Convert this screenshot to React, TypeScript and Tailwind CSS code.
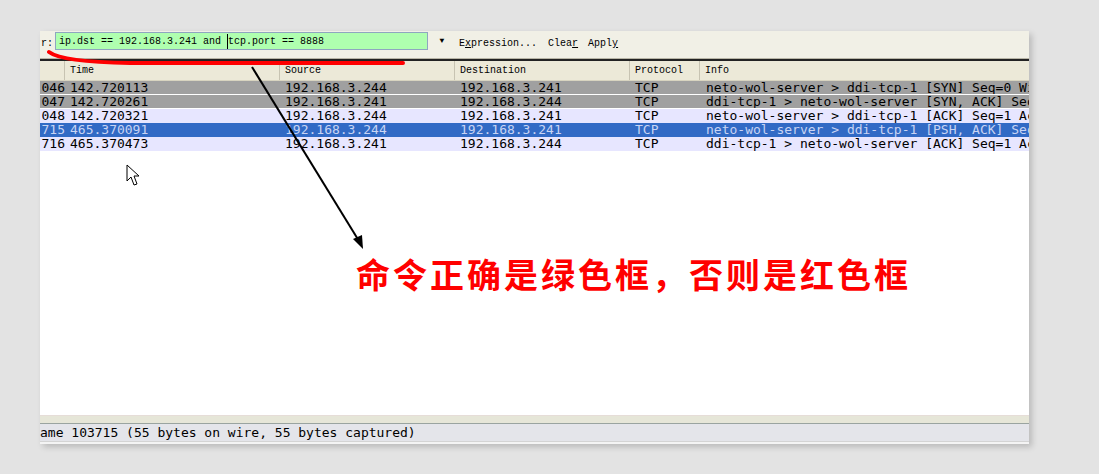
import React from "react";

const rows = [
  { no: "046", time: "142.720113", src: "192.168.3.244", dst: "192.168.3.241", info: "neto-wol-server > ddi-tcp-1 [SYN] Seq=0 Win=65535 Len=0", kind: "gray" },
  { no: "047", time: "142.720261", src: "192.168.3.241", dst: "192.168.3.244", info: "ddi-tcp-1 > neto-wol-server [SYN, ACK] Seq=0 Ack=1", kind: "gray" },
  { no: "048", time: "142.720321", src: "192.168.3.244", dst: "192.168.3.241", info: "neto-wol-server > ddi-tcp-1 [ACK] Seq=1 Ack=1 Win=65535", kind: "lav" },
  { no: "715", time: "465.370091", src: "192.168.3.244", dst: "192.168.3.241", info: "neto-wol-server > ddi-tcp-1 [PSH, ACK] Seq=1 Ack=1", kind: "sel" },
  { no: "716", time: "465.370473", src: "192.168.3.241", dst: "192.168.3.244", info: "ddi-tcp-1 > neto-wol-server [ACK] Seq=1 Ack=2 Win=65535", kind: "lav" },
];

const rowBg: Record<string, string> = {
  gray: "bg-[#a0a0a0] text-black border-b border-white",
  lav: "bg-[#e7e6ff] text-black",
  sel: "bg-[#316ac5] text-[#c8d4f4]",
};

const App = () => {
  return (
    <div className="relative w-[1099px] h-[474px] bg-[#e3e3e3] overflow-hidden pt-[31px] pl-[40px]">
      {/* window */}
      <div className="w-[989px] h-[413px] bg-white flex flex-col overflow-hidden shadow-[3px_3px_6px_rgba(0,0,0,0.18)]">
        {/* filter toolbar */}
        <div className="h-[27px] shrink-0 bg-[#f1f0e6] flex items-start pt-[1px] font-['Liberation_Mono',monospace] text-[10px] text-black">
          <span className="w-[15px] shrink-0 pl-[1px] pt-[4px]">r:</span>
          <div className="w-[373px] shrink-0 h-[18px] bg-[#afffaf] border border-[#8fa6c0] flex items-center pl-[3px] whitespace-pre">
            ip.dst == 192.168.3.241 and <span className="border-l border-black">tcp.port == 8888</span>
          </div>
          <div className="w-[28px] shrink-0 h-[18px] flex items-center justify-center">
            <span className="text-[8px] leading-none">▼</span>
          </div>
          <span className="pt-[4px] ml-[3px]">
            E<span className="underline">x</span>pression...
          </span>
          <span className="pt-[4px] ml-[11px]">
            Clea<span className="underline">r</span>
          </span>
          <span className="pt-[4px] ml-[10px]">
            Appl<span className="underline">y</span>
          </span>
        </div>
        <div className="h-[1px] shrink-0 bg-[#b8b5a6]" />
        <div className="h-[2px] shrink-0 bg-[#222]" />
        {/* column header */}
        <div className="h-[20px] shrink-0 bg-[#ece9d8] flex items-center font-['Liberation_Mono',monospace] text-[10px] text-black border-b border-[#d8d4c0]">
          <div className="w-[25px] shrink-0 h-full border-r border-[#c7c3b2]" />
          <div className="w-[215px] shrink-0 h-full border-r border-[#c7c3b2] pl-[5px] flex items-center">Time</div>
          <div className="w-[175px] shrink-0 h-full border-r border-[#c7c3b2] pl-[5px] flex items-center">Source</div>
          <div className="w-[175px] shrink-0 h-full border-r border-[#c7c3b2] pl-[5px] flex items-center">Destination</div>
          <div className="w-[70px] shrink-0 h-full border-r border-[#c7c3b2] pl-[5px] flex items-center">Protocol</div>
          <div className="flex-1 h-full pl-[5px] flex items-center">Info</div>
        </div>
        {/* packet rows */}
        <div className="shrink-0 font-['DejaVu_Sans_Mono',monospace] text-[13px] leading-[14px]">
          {rows.map((r) => (
            <div key={r.no} className={`h-[14px] flex whitespace-nowrap overflow-hidden ${rowBg[r.kind]}`}>
              <div className="w-[25px] shrink-0 flex justify-end">{r.no}</div>
              <div className="w-[215px] shrink-0 pl-[5px]">{r.time}</div>
              <div className="w-[175px] shrink-0 pl-[5px]">{r.src}</div>
              <div className="w-[175px] shrink-0 pl-[5px]">{r.dst}</div>
              <div className="w-[70px] shrink-0 pl-[5px]">TCP</div>
              <div className="flex-1 min-w-0 pl-[6px] whitespace-pre overflow-hidden">{r.info}</div>
            </div>
          ))}
        </div>
        <div className="flex-1 bg-white" />
        {/* bottom bands */}
        <div className="h-[1px] shrink-0 bg-[#e6ddd8]" />
        <div className="h-[7px] shrink-0 bg-[#e6e6d8]" />
        <div className="h-[1px] shrink-0 bg-[#9aa4a0]" />
        <div className="h-[17px] shrink-0 bg-[#e4e5ea] font-['DejaVu_Sans_Mono',monospace] text-[13px] leading-[17px] text-black whitespace-pre">
          ame 103715 (55 bytes on wire, 55 bytes captured)
        </div>
        <div className="h-[3px] shrink-0 bg-[#f4f4f4] border-t border-[#d4d4d4]" />
      </div>

      {/* annotations drawn over the screenshot */}
      <svg className="absolute left-0 top-0 pointer-events-none" width="1099" height="474">
        <path d="M49 52 Q 62 62 130 63 L 403 63" fill="none" stroke="#ff0000" strokeWidth="4" strokeLinecap="round" />
        <line x1="252" y1="67" x2="359" y2="241" stroke="#000" strokeWidth="2" />
        <polygon points="363,249 353,239 362,235" fill="#000" />
        {/* mouse cursor */}
        <path d="M127 165 L127 181 L131 177 L134 185 L137 184 L134 176 L139 176 Z" fill="#fff" stroke="#000" strokeWidth="1" />
      </svg>
      <div className="absolute left-[356px] top-[254px] font-['Noto_Sans_CJK_SC',sans-serif] font-bold text-[34px] leading-[40px] tracking-[3px] text-[#ff0000] whitespace-nowrap">
        命令正确是绿色框，否则是红色框
      </div>
    </div>
  );
};

export default App;
